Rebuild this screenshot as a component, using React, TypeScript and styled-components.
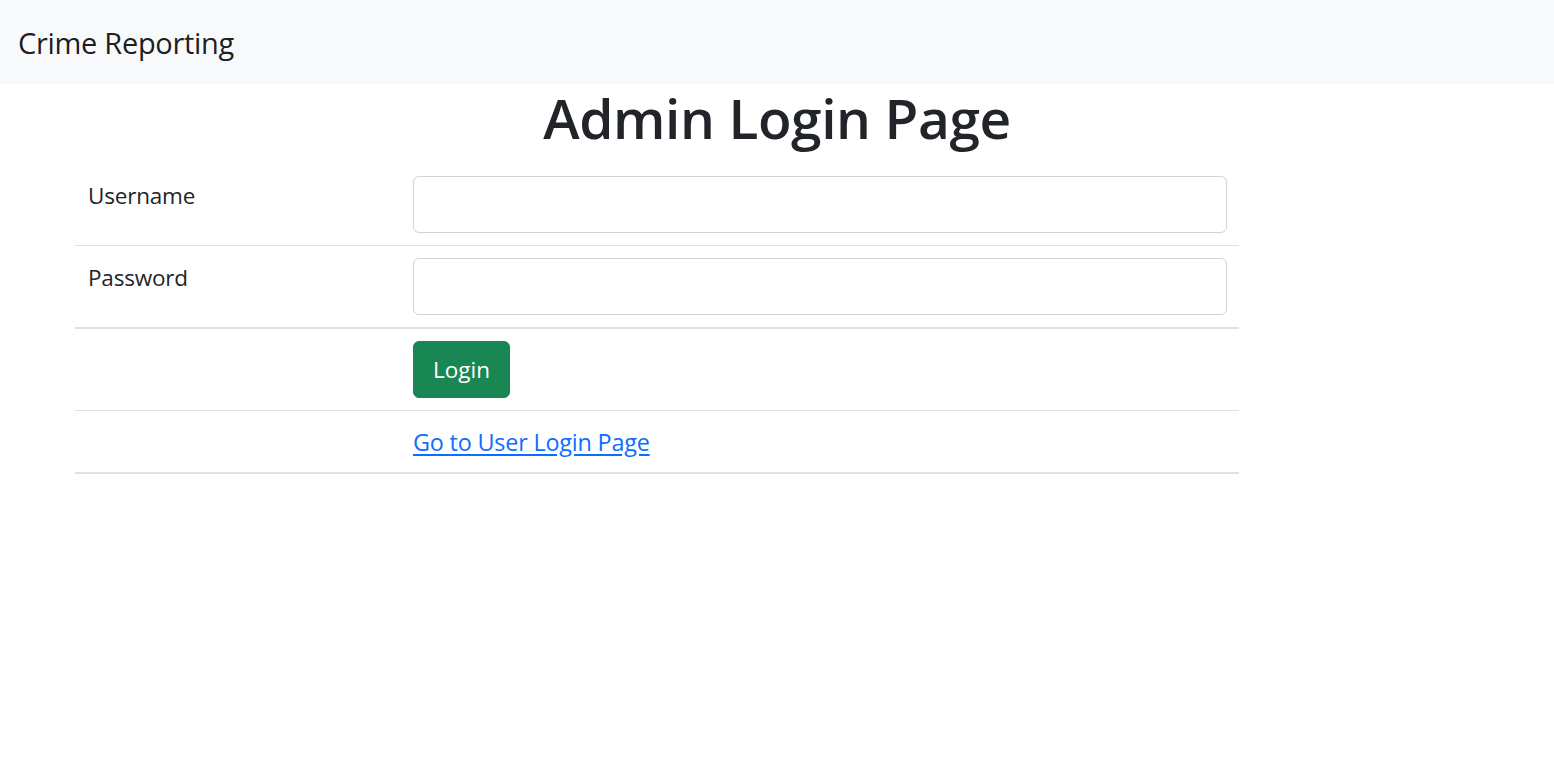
import React from "react";
import styled, { createGlobalStyle } from "styled-components";

const Global = createGlobalStyle`
  html, body { margin: 0; padding: 0; background: #fff; }
  body {
    font-family: "Open Sans", "Noto Sans", "Liberation Sans", sans-serif;
    font-size: 24px;
    line-height: 1.5;
    color: #212529;
  }
  * { box-sizing: border-box; }
`;

const Navbar = styled.nav`
  background: #f8f9fa;
  padding: 12px 18px;
  display: flex;
  align-items: center;
`;

const Brand = styled.a`
  font-size: 29px;
  line-height: 45px;
  padding: 7.5px 0;
  color: rgba(0, 0, 0, 0.9);
  text-decoration: none;
  letter-spacing: -0.3px;
`;

const Title = styled.h1`
  margin: 0 0 12px;
  text-align: center;
  font-size: 55px;
  font-weight: 600;
  line-height: 67.5px;
  letter-spacing: -0.4px;
`;

const Table = styled.table`
  margin-left: 75px;
  width: 1164px;
  border-collapse: collapse;
`;

const Row = styled.tr<{ $thick?: boolean }>`
  border-bottom: ${(p) => (p.$thick ? "2px" : "1.5px")} solid #dee2e6;
`;

const LabelCell = styled.td`
  width: 326px;
  padding: 15px 13px 9px;
  vertical-align: top;
  font-size: 22.5px;
  letter-spacing: -0.2px;
`;

const FieldCell = styled.td`
  padding: 12px;
  vertical-align: top;
`;

const Input = styled.input`
  display: block;
  width: 100%;
  height: 57px;
  padding: 9px 18px;
  font: inherit;
  color: #212529;
  background: #fff;
  border: 1px solid #ced4da;
  border-radius: 6px;
  outline: none;
`;

const Button = styled.button`
  display: inline-block;
  height: 57px;
  padding: 1px 19px 0;
  font-family: inherit;
  font-size: 22.5px;
  line-height: 36px;
  color: #fff;
  background: #198754;
  border: 1px solid #198754;
  border-radius: 6px;
  cursor: pointer;
`;

const LinkText = styled.a`
  display: inline-block;
  margin-top: 1px;
  font-size: 23.4px;
  line-height: 36px;
  color: #0d6efd;
  text-decoration: underline;
  text-underline-offset: 3px;
  letter-spacing: -0.2px;
`;

export default function App() {
  return (
    <>
      <Global />
      <Navbar>
        <Brand href="#">Crime Reporting</Brand>
      </Navbar>
      <Title>Admin Login Page</Title>
      <Table>
        <tbody>
          <Row>
            <LabelCell>Username</LabelCell>
            <FieldCell>
              <Input type="text" />
            </FieldCell>
          </Row>
          <Row $thick>
            <LabelCell>Password</LabelCell>
            <FieldCell>
              <Input type="password" />
            </FieldCell>
          </Row>
          <Row>
            <LabelCell />
            <FieldCell>
              <Button>Login</Button>
            </FieldCell>
          </Row>
          <Row $thick>
            <LabelCell />
            <FieldCell>
              <LinkText href="#">Go to User Login Page</LinkText>
            </FieldCell>
          </Row>
        </tbody>
      </Table>
    </>
  );
}
